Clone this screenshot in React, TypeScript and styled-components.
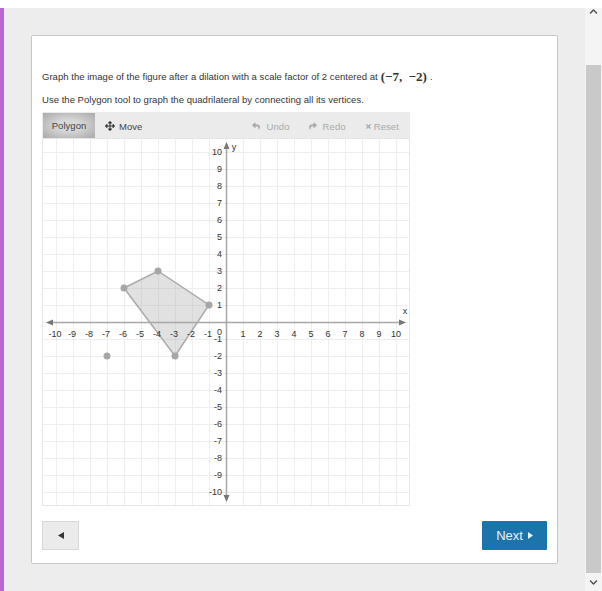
import React from 'react';
import styled, { createGlobalStyle } from 'styled-components';
import { FaArrowsAlt, FaReply, FaShare, FaTimes, FaChevronUp, FaChevronDown } from 'react-icons/fa';

const GlobalStyle = createGlobalStyle`
    html, body {
        margin: 0;
        padding: 0;
        background: #fff;
        overflow: hidden;
    }
    * { box-sizing: border-box; }
`;

const Page = styled.div`
    width: 602px;
    height: 591px;
    display: flex;
    overflow: hidden;
    font-family: "Liberation Sans", Arial, sans-serif;
    color: #333;
`;

const Content = styled.div`
    width: 585px;
    height: 591px;
    padding-top: 8px;
    background: #fff;
`;

const Stage = styled.div`
    height: 583px;
    background: #ededed;
    border-left: 4px solid #b668d0;
    padding: 27px 0 0 27px;
`;

const Card = styled.div`
    width: 527px;
    height: 529px;
    background: #fff;
    border: 1px solid #c8c8c8;
    border-radius: 2px;
    padding: 34px 10px 0 10px;
`;

const Prompt = styled.p`
    margin: 0;
    height: 14px;
    display: flex;
    align-items: center;
    font-size: 9.5px;
    line-height: 14px;
    letter-spacing: 0.03px;
    white-space: pre;
`;

const Instruction = styled(Prompt)`
    margin-top: 9px;
`;

const Maths = styled.span`
    font-family: "Liberation Serif", "DejaVu Serif", serif;
    font-size: 13px;
    font-weight: bold;
    margin: 0 3px 0 3px;
    word-spacing: 3px;
    color: #333;
`;

const Graph = styled.div`
    width: 368px;
    margin-top: 5px;
`;

const Toolbar = styled.div`
    height: 26px;
    background: #ebebeb;
    display: flex;
    align-items: center;
    padding-left: 1px;
`;

const ToolButton = styled.div<{ $active?: boolean }>`
    height: 25px;
    display: flex;
    align-items: center;
    justify-content: center;
    gap: 4px;
    font-size: 9.5px;
    letter-spacing: 0.05px;
    color: #444;
    padding: 0 10px;
    margin-top: ${(p) => (p.$active ? 1 : 2)}px;
    ${(p) =>
        p.$active
            ? `background: radial-gradient(ellipse at center, #d8d8d8 30%, #a9a9a9 100%);
               width: 52px;`
            : ''}
`;

const HistoryGroup = styled.div`
    margin: 2px 0 0 auto;
    display: flex;
    align-items: center;
    gap: 19px;
    padding-right: 11px;
`;

const HistoryButton = styled.div<{ $gap: number }>`
    display: flex;
    align-items: center;
    gap: ${(p) => p.$gap}px;
    font-size: 9.5px;
    letter-spacing: 0.1px;
    color: #aaa;
`;

const Plot = styled.svg`
    display: block;
    width: 368px;
    height: 368px;
`;

const Actions = styled.div`
    margin-top: 15px;
    display: flex;
    justify-content: space-between;
`;

const BackButton = styled.div`
    width: 37px;
    height: 29px;
    background: #ebebeb;
    border: 1px solid #d8d8d8;
    display: flex;
    align-items: center;
    justify-content: center;
`;

const NextButton = styled.div`
    width: 65px;
    height: 29px;
    background: #1b75ab;
    border-radius: 1px;
    color: #e6f4fb;
    font-size: 13px;
    display: flex;
    align-items: center;
    justify-content: center;
    gap: 5px;
`;

const Scrollbar = styled.div`
    width: 17px;
    height: 591px;
    background: linear-gradient(#fff 8px, #f4f4f4 8px);
    display: flex;
    flex-direction: column;
`;

const ScrollArrow = styled.div<{ $top?: boolean }>`
    height: ${(p) => (p.$top ? 20 : 17)}px;
    padding-top: ${(p) => (p.$top ? 3 : 0)}px;
    display: flex;
    align-items: center;
    justify-content: center;
    color: #505050;
    font-size: 9px;
`;

const ScrollTrack = styled.div`
    flex: 1;
    padding: 45px 1px 1px 1px;
`;

const ScrollThumb = styled.div`
    height: 508px;
    background: #c9c9c9;
`;

const UNIT = 17;
const ORIGIN_X = 184;
const ORIGIN_Y = 184;
const px = (x: number) => ORIGIN_X + x * UNIT;
const py = (y: number) => ORIGIN_Y - y * UNIT;
const range = Array.from({ length: 21 }, (_, i) => i - 10);
const ticks = range.filter((n) => n !== 0);
const shape: [number, number][] = [[-6, 2], [-4, 3], [-1, 1], [-3, -2]];

const CoordinatePlane: React.FC = () => (
    <Plot viewBox="0 0 368 368">
        <rect width="368" height="368" fill="#fff" />
        <g stroke="#eeeeee" strokeWidth="1">
            {range.map((n) => (
                <line key={`v${n}`} x1={px(n) + 0.5} y1="0" x2={px(n) + 0.5} y2="368" />
            ))}
            {range.map((n) => (
                <line key={`h${n}`} x1="0" y1={py(n) + 0.5} x2="368" y2={py(n) + 0.5} />
            ))}
        </g>
        <rect x="0.5" y="0.5" width="367" height="367" fill="none" stroke="#e6e6e6" />
        <g stroke="#a8a8a8" strokeWidth="1.5">
            <line x1="8" y1={ORIGIN_Y + 0.5} x2="360" y2={ORIGIN_Y + 0.5} />
            <line x1={ORIGIN_X + 0.5} y1="8" x2={ORIGIN_X + 0.5} y2="360" />
        </g>
        <g fill="#777">
            <polygon points="4,184.5 11,181.5 11,187.5" />
            <polygon points="364,184.5 357,181.5 357,187.5" />
            <polygon points="184.5,4 181.5,11 187.5,11" />
            <polygon points="184.5,364 181.5,357 187.5,357" />
        </g>
        <polygon
            points={shape.map(([x, y]) => `${px(x)},${py(y)}`).join(' ')}
            fill="rgba(170,170,170,0.35)"
            stroke="#aaa"
            strokeWidth="1.5"
        />
        {shape.map(([x, y]) => (
            <circle key={`${x}:${y}`} cx={px(x)} cy={py(y)} r="3.5" fill="#a6a6a6" />
        ))}
        <circle cx={px(-7)} cy={py(-2)} r="3.5" fill="#a6a6a6" />
        <g fontFamily="'Liberation Sans', Arial, sans-serif" fontSize="9" fill="#333">
            {ticks.map((n) => (
                <text key={`x${n}`} x={px(n) + (n < 0 ? -1 : 0)} y={ORIGIN_Y + 15} textAnchor="middle">
                    {n}
                </text>
            ))}
            {ticks.map((n) => (
                <text key={`y${n}`} x={ORIGIN_X - 4} y={py(n) + 3} textAnchor="end">
                    {n}
                </text>
            ))}
            <text x={ORIGIN_X - 4} y={ORIGIN_Y + 13} textAnchor="end">0</text>
            <text x="363" y="176" textAnchor="middle">x</text>
            <text x="192" y="12" textAnchor="middle">y</text>
        </g>
    </Plot>
);

const App: React.FC = () => (
    <Page>
        <GlobalStyle />
        <Content>
            <Stage>
                <Card>
                    <Prompt>
                        Graph the image of the figure after a dilation with a scale factor of 2 centered at
                        <Maths>(−7, −2)</Maths>.
                    </Prompt>
                    <Instruction>Use the Polygon tool to graph the quadrilateral by connecting all its vertices.</Instruction>
                    <Graph>
                        <Toolbar>
                            <ToolButton $active>Polygon</ToolButton>
                            <ToolButton>
                                <FaArrowsAlt size={10} color="#333" />
                                Move
                            </ToolButton>
                            <HistoryGroup>
                                <HistoryButton $gap={6}><FaReply size={8} />Undo</HistoryButton>
                                <HistoryButton $gap={6}><FaShare size={8} />Redo</HistoryButton>
                                <HistoryButton $gap={2}><FaTimes size={7} />Reset</HistoryButton>
                            </HistoryGroup>
                        </Toolbar>
                        <CoordinatePlane />
                    </Graph>
                    <Actions>
                        <BackButton>
                            <svg width="6" height="7" viewBox="0 0 6 7"><polygon points="0,3.5 6,0 6,7" fill="#333" /></svg>
                        </BackButton>
                        <NextButton>
                            Next
                            <svg width="5" height="7" viewBox="0 0 5 7"><polygon points="5,3.5 0,0 0,7" fill="#e6f4fb" /></svg>
                        </NextButton>
                    </Actions>
                </Card>
            </Stage>
        </Content>
        <Scrollbar>
            <ScrollArrow $top><FaChevronUp /></ScrollArrow>
            <ScrollTrack><ScrollThumb /></ScrollTrack>
            <ScrollArrow><FaChevronDown /></ScrollArrow>
        </Scrollbar>
    </Page>
);

export default App;
